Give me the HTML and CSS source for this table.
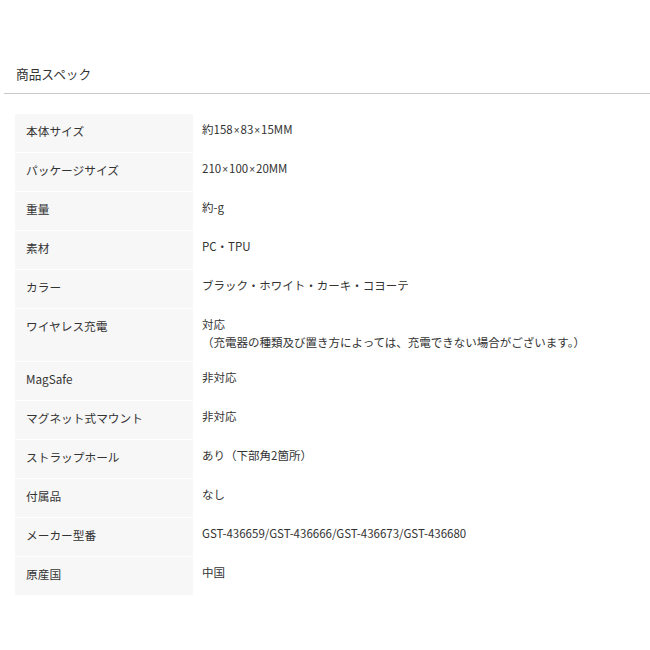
FILE: index.html
```html
<!DOCTYPE html>
<html lang="ja">
<head>
  <meta charset="UTF-8">
  <title>商品スペック</title>
  <link rel="stylesheet" href="styles.css">
</head>
<body>
  <div class="spec">
    <h2 class="spec-title">商品スペック</h2>

    <table class="spec-table">
      <tr><th>本体サイズ</th><td>約158<span class="times">×</span>83<span class="times">×</span>15MM</td></tr>
      <tr><th>パッケージサイズ</th><td>210<span class="times">×</span>100<span class="times">×</span>20MM</td></tr>
      <tr><th>重量</th><td>約-g</td></tr>
      <tr><th>素材</th><td>PC・TPU</td></tr>
      <tr><th>カラー</th><td>ブラック・ホワイト・カーキ・コヨーテ</td></tr>
      <tr><th>ワイヤレス充電</th><td>対応<br>（充電器の種類及び置き方によっては、充電できない場合がございます。）</td></tr>
      <tr><th>MagSafe</th><td>非対応</td></tr>
      <tr><th>マグネット式マウント</th><td>非対応</td></tr>
      <tr><th>ストラップホール</th><td>あり（下部角2箇所）</td></tr>
      <tr><th>付属品</th><td>なし</td></tr>
      <tr><th>メーカー型番</th><td>GST-436659/GST-436666/GST-436673/GST-436680</td></tr>
      <tr><th>原産国</th><td>中国</td></tr>
    </table>
  </div>
</body>
</html>
```

FILE: styles.css
```css
:root {
  --text-color: #333;
  --label-bg: #f7f7f7;
  --rule-color: #c8c8c8;
}

* {
  box-sizing: border-box;
  margin: 0;
  padding: 0;
}

body {
  font-family: 'Noto Sans CJK JP', 'Noto Sans', sans-serif;
  color: var(--text-color);
  background: #fff;
}

.spec {
  padding-top: 64px;
}

.spec-title {
  font-size: 12.7px;
  font-weight: 400;
  line-height: 20px;
  margin-left: 4px;
  padding: 0 0 9px 12px;
  border-bottom: 1px solid var(--rule-color);
}

.spec-table {
  margin: 19px 0 0 15px;
  border-collapse: separate;
  border-spacing: 0 1px;
  font-size: 11.7px;
  line-height: 18px;
}

.spec-table th {
  width: 178px;
  text-align: left;
  font-weight: 400;
  vertical-align: top;
  background: var(--label-bg);
  padding: 8px 11px 12px;
}

.spec-table td {
  vertical-align: top;
  font-size: 11.5px;
  padding: 6px 9px 10px;
}

/* the CJK font draws × full width; the original uses a narrow one */
.times {
  font-family: 'Liberation Sans', sans-serif;
  font-size: 10px;
  padding: 0 1px;
}
```
